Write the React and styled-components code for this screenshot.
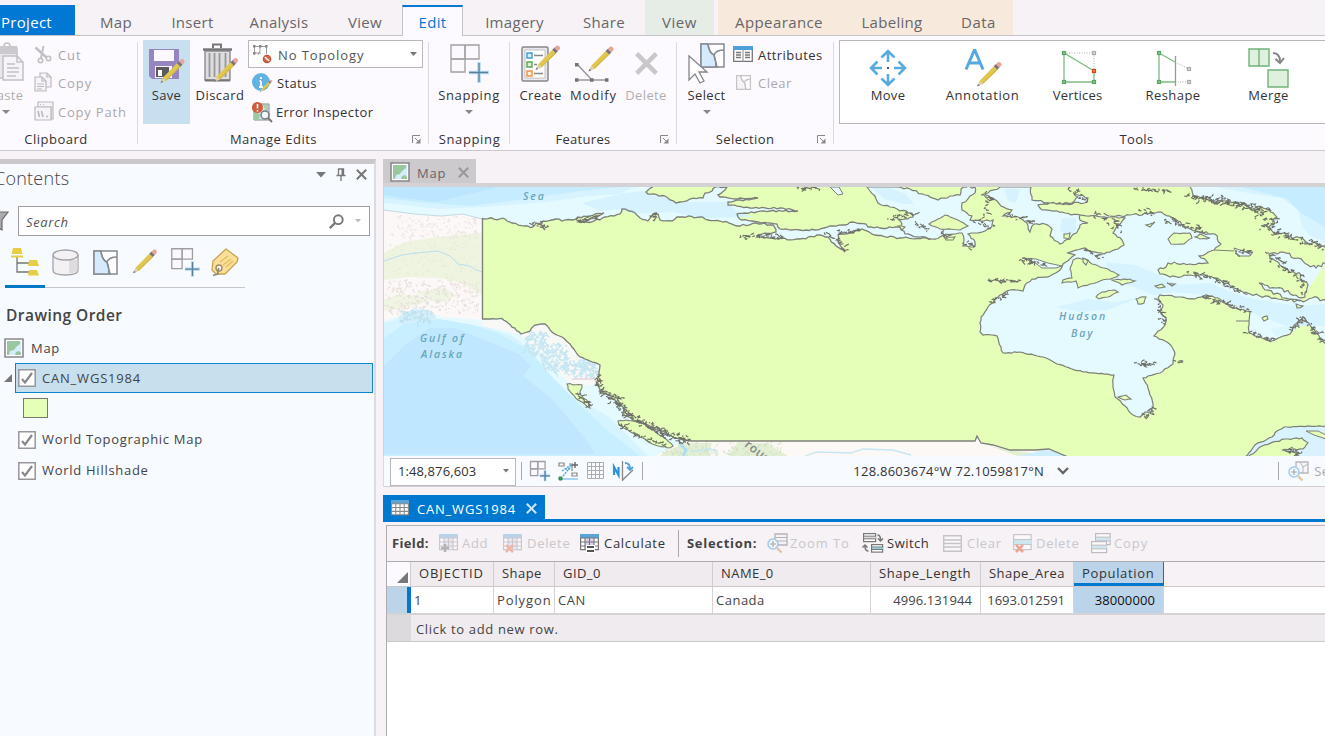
import React from 'react';
import styled, { createGlobalStyle, css } from 'styled-components';

const Global = createGlobalStyle`
  * { box-sizing: border-box; }
  html, body { margin: 0; height: 100%; overflow: hidden; }
  body { background: #f6f2f6; font-family: "Open Sans", "Noto Sans", sans-serif; font-size: 13px; letter-spacing: .35px; color: #333; }
  svg { display: block; flex: none; overflow: visible; }
`;

/* ---------- shell ---------- */
const Shell = styled.div`
  width: 1325px; height: 736px; overflow: hidden;
  display: flex; flex-direction: column; background: #f6f2f6;
`;
const Body = styled.div`display: flex; flex: 1; min-height: 0; padding-top: 8px;`;

/* ---------- ribbon tabs ---------- */
const TabBar = styled.div`
  display: flex; height: 36px; flex: none; border-bottom: 1px solid #c6c3c8;
`;
const TabSet = styled.div`
  display: flex; height: 35px; background: ${p => p.$bg}; margin-left: ${p => p.$gap || 0}px;
`;
const Tab = styled.div`
  width: ${p => p.$w}px; height: 30px; margin-top: 5px; padding-top: 4px;
  display: flex; align-items: center; justify-content: center;
  font-size: 15px; color: #68666a; white-space: nowrap; letter-spacing: ${p => p.$ls ?? 0.3}px;
  ${p => p.$project && css`background: #0078d4; color: #fff; justify-content: flex-start; padding-left: 1px;`}
  ${p => p.$active && css`
    height: 31px; margin-left: 2px; background: #fdfaff; color: #0078d4;
    border: 1px solid #c6c3c8; border-top: 2px solid #0078d4; border-bottom: 0; padding-top: 1px;
  `}
`;

/* ---------- ribbon ---------- */
const Ribbon = styled.div`
  display: flex; height: 115px; flex: none; background: #fdfaff; border-bottom: 1px solid #cbc8cc; overflow: hidden;
`;
const Group = styled.div`
  width: ${p => p.$w}px; flex: none; display: flex; flex-direction: column; position: relative;
  &::after { content: ""; width: 1px; height: 102px; background: #dcd9dd; position: absolute; right: 0; top: 6px; }
`;
const GroupBody = styled.div`display: flex; height: 92px; padding: 4px 0 0 ${p => p.$pl || 0}px;`;
const GroupName = styled.div`
  height: 22px; line-height: 22px; text-align: center; color: #333; padding-right: ${p => p.$pr || 0}px; letter-spacing: ${p => p.$ls ?? 0.35}px;
`;
const Launcher = styled.div`position: absolute; right: 8px; bottom: 6px;`;
const BigButton = styled.div`
  width: ${p => p.$w}px; height: 84px; margin-left: ${p => p.$ml || 0}px; flex: none;
  display: flex; flex-direction: column; align-items: center;
  color: ${p => (p.$off ? '#b0aeb2' : '#333')}; background: ${p => (p.$on ? '#c8dff0' : 'transparent')};
  white-space: nowrap; letter-spacing: ${p => p.$ls ?? 0.35}px;
`;
const BigIcon = styled.div`height: 46px; display: flex; align-items: center; justify-content: center;`;
const BigText = styled.div`line-height: 19px; height: 19px;`;
const Stack = styled.div`display: flex; flex-direction: column; margin-left: ${p => p.$ml || 0}px; width: ${p => p.$w}px;`;
const SmallButton = styled.div`
  height: ${p => p.$h || 28}px; display: flex; align-items: center; padding-left: ${p => p.$pl || 0}px; gap: ${p => p.$gap ?? 6}px;
  color: ${p => (p.$off ? '#aaa8ac' : '#333')}; white-space: nowrap; letter-spacing: ${p => p.$ls ?? 0.35}px;
  span { padding-top: ${p => p.$drop || 0}px; }
`;
const Combo = styled.div`
  width: 175px; height: 28px; margin-bottom: 1px; border: 1px solid #bbb8bd; background: #fff;
  display: flex; align-items: center; padding: 0 5px 0 3px; gap: 6px; color: #555; letter-spacing: .9px;
  span { padding-top: 2px; }
  svg:last-child { margin-left: auto; }
`;
const Gallery = styled.div`
  display: flex; width: 600px; height: 84px; background: #fff; border: 1px solid #bbb8bd;
`;
const GalleryItem = styled(BigButton)`
  height: 82px; margin-top: -1px;
  ${BigIcon} { padding-top: 9px; }
`;

/* ---------- contents pane ---------- */
const Contents = styled.div`
  width: 376px; flex: none; background: #f7faff; border-top: 5px solid #cbc8cc; border-right: 2px solid #dddbe0;
  display: flex; flex-direction: column;
`;
const PaneHead = styled.div`
  height: 27px; display: flex; align-items: center; padding-right: 7px;
  font-size: 18px; color: #757378; letter-spacing: .25px;
`;
const PaneTitle = styled.div`margin: 0 auto 0 -6px; font-weight: 300; color: #444;`;
const PaneTools = styled.div`display: flex; gap: 10px; align-items: center; margin-top: -6px;`;
const SearchRow = styled.div`display: flex; margin-top: 15px; align-items: center;`;
const FilterSlot = styled.div`width: 18px; flex: none; display: flex; svg { margin-left: -8px; }`;
const SearchBox = styled.div`
  width: 352px; height: 30px; border: 1px solid #a09ea2; background: #fff; display: flex; align-items: center;
  padding: 0 8px 0 7px; font-style: italic; color: #555; gap: 11px; letter-spacing: .6px;
  span { margin-right: auto; padding-top: 1px; }
`;
const ViewTabs = styled.div`
  width: 240px; height: 45px; margin: 7px 0 0 5px; display: flex; border-bottom: 1px solid #c8c6ca;
`;
const ViewTab = styled.div`
  width: 40px; height: 45px; display: flex; align-items: center; justify-content: center; padding-bottom: 7px;
  ${p => p.$on && css`border-bottom: 3px solid #0078c8; padding-bottom: 4px;`}
`;
const Heading = styled.div`font-weight: 600; font-size: 15.5px; color: #444; margin: 17px 0 0 6px; height: 22px; line-height: 20px; letter-spacing: .45px;`;
const TreeRow = styled.div`
  height: ${p => p.$h || 30}px; display: flex; align-items: center; padding: ${p => p.$pt || 0}px 0 0 ${p => p.$pl || 0}px; gap: ${p => p.$gap || 6}px;
  color: #444; letter-spacing: .72px;
  span { margin-top: ${p => p.$rise ?? -1}px; }
`;
const Selected = styled.div`
  width: 358px; height: 30px; background: #c8dfee; border: 1px solid #0a84d4; padding-left: 2px;
  display: flex; align-items: center; gap: 6px; letter-spacing: .8px; margin-left: -3px;
`;
const Swatch = styled.div`width: 25px; height: 20px; background: #e6ffb8; border: 1px solid #777; margin-left: 23px;`;
const SwatchRow = styled.div`height: 30px; display: flex; align-items: center;`;

/* ---------- map view ---------- */
const Work = styled.div`flex: 1; min-width: 0; margin-left: 7px; display: flex; flex-direction: column;`;
const MapTabs = styled.div`height: 28px; flex: none; border-bottom: 4px solid #d5d2d6; display: flex; align-items: flex-end;`;
const MapTab = styled.div`
  width: 93px; height: 24px; background: #cdcacd; display: flex; align-items: center; padding: 2px 7px 0 7px; gap: 7px;
  color: #66646a; letter-spacing: .8px;
  span { padding-top: 1px; }
  svg:last-child { margin-left: auto; }
`;
const MapFrame = styled.div`height: 269px; flex: none; border-left: 1px solid #d5d2d6; overflow: hidden;`;
const StatusBar = styled.div`
  height: 31px; flex: none; background: #f7faff; border-left: 1px solid #dddbe0; border-bottom: 1px solid #d0ced2;
  display: flex; align-items: center; padding: 0 0 0 6px; white-space: nowrap; color: #333; overflow: hidden;
  > * { flex: none; }
`;
const ScaleBox = styled.div`
  width: 126px; height: 28px; border: 1px solid #bbb8bd; background: #fff; display: flex; align-items: center;
  padding: 0 6px 1px 7px; justify-content: space-between; letter-spacing: .1px; margin-top: 1px;
`;
const VRule = styled.div`flex: none; width: 1px; height: ${p => p.$h}px; background: #aaa8ac; margin: 0 ${p => p.$mr || 0}px 0 ${p => p.$ml || 0}px;`;
const StatusIcons = styled.div`display: flex; gap: 8px; align-items: center;`;
const Coords = styled.div`width: 216px; display: flex; align-items: center; justify-content: space-between; letter-spacing: .25px; margin: 0 1px 0 210px;`;
const SelCount = styled.div`margin-left: 9px; display: flex; align-items: center; gap: 5px; color: #aaa8ac;`;

/* ---------- attribute table ---------- */
const TableTabs = styled.div`height: 27px; margin-top: 8px; flex: none; border-bottom: 3px solid #0078d0; display: flex;`;
const TableTab = styled.div`
  width: 162px; height: 25px; background: #0078d0; color: #fff; display: flex; align-items: center; padding: 2px 8px 0 8px;
  gap: 8px; letter-spacing: .8px;
  svg:last-child { margin-left: auto; }
`;
const TablePane = styled.div`
  flex: 1; margin: 3px 0 0 3px; border-left: 1px solid #aeabb0; border-top: 1px solid #b5b2b6; background: #fff; overflow: hidden;
`;
const Toolbar = styled.div`
  height: 35px; background: #f6f2f6; display: flex; align-items: center; padding: 0 0 1px 5px; white-space: nowrap; color: #333;
`;
const ToolLabel = styled.div`font-weight: 700; letter-spacing: ${p => p.$ls ?? 0}px; width: ${p => p.$w}px; color: #444; flex: none;`;
const Tool = styled.div`
  width: ${p => p.$w}px; display: flex; align-items: center; gap: ${p => p.$gap ?? 4}px; letter-spacing: ${p => p.$ls ?? 0.7}px;
  color: ${p => (p.$off ? '#c9c7cb' : '#333')};
`;
const columns = '24px 83px 61px 158px 158px 110px 93px 90px 1fr';
const HeadRow = styled.div`display: grid; grid-template: 100% / ${columns}; height: 26px; border-top: 1px solid #aeabb0; border-bottom: 1px solid #cbc8cc; background: #f6f2f6;`;
const DataRow = styled.div`display: grid; grid-template: 100% / ${columns}; height: 28px; border-bottom: 2px solid #d6d3d7; background: #fff;`;
const AddRow = styled.div`display: flex; height: 27px; background: #efebee; border-bottom: 1px solid #cbc8cc;`;
const AddStub = styled.div`width: 24px; background: #dcdadc;`;
const AddText = styled.div`line-height: 28px; padding-left: 5px; color: #444; letter-spacing: .65px;`;
const HeadCell = styled.div`
  background: ${p => (p.$on ? '#bcd4e9' : '#efebee')}; border-right: 1px solid #d0cdd1; line-height: 22px; padding: 0 9px 0 8px;
  text-align: ${p => p.$align || 'left'}; color: #333; letter-spacing: ${p => p.$ls ?? 0.45}px; white-space: nowrap;
  ${p => p.$on && css`border-right: 1px solid #0078d0; border-bottom: 3px solid #0078d0;`}
`;
const Corner = styled.div`background: #fdfaff; border-right: 1px solid #d0cdd1; display: flex; align-items: flex-end; justify-content: flex-end; padding: 0 2px 3px 0;`;
const RowMark = styled.div`background: #bcd4e9; border-right: 4px solid #0078d0;`;
const Cell = styled.div`
  border-right: 1px solid #d6d3d7; line-height: 27px; padding: 0 8px 0 3px; text-align: ${p => p.$align || 'left'};
  background: ${p => (p.$on ? '#bcd4e9' : '#fff')}; color: ${p => (p.$on ? '#111' : '#444')}; letter-spacing: ${p => p.$ls ?? 0.5}px; white-space: nowrap;
`;

/* ---------- icons ---------- */
const Arrow = ({ c = '#777', w = 7 }) => (
  <svg width={w} height={w / 2 + 0.5} viewBox="0 0 8 4.5"><path d="M0 0h8L4 4.5z" fill={c} /></svg>
);
const Close = ({ c = '#777', s = 11, w = 2 }) => (
  <svg width={s} height={s} viewBox="0 0 11 11"><path d="M.8.8l9.4 9.4M10.2.8L.8 10.2" stroke={c} strokeWidth={w} /></svg>
);
const LaunchIcon = () => (
  <svg width="9" height="9" viewBox="0 0 9 9" fill="none" stroke="#888"><path d="M.5 8V.5H8" /><path d="M3 3l4 4" /><path d="M8.5 3.5v5h-5z" fill="#888" stroke="none" /></svg>
);
/* Pencil pointing down-left, tip at (0,25), eraser at (25,0) */
const Pencil = ({ x = 0, y = 0, s = 1 }) => (
  <g transform={`translate(${x} ${y}) scale(${s})`}>
    <path d="M2.4 19.600L17 4.600l3.600 3.600L5.800 22.600z" fill="#e0c84f" /><path d="M5 21.900L19.800 7.400l.8.8L5.800 22.600z" fill="#d0b644" />
    <path d="M0 25l2.4-5.400 3.400 3z" fill="#e0cfae" /><path d="M0 25l1.100-2.600 1.600 1.500z" fill="#777" />
    <path d="M16.800 4.800L19 2.600l3.500 3.500-2.200 2.200z" fill="#76747a" />
    <path d="M18.800 2.800L21 .8q1.500-.9 2.800.4t.6 2.900L22.300 6.300z" fill="#e3a79c" />
  </g>
);
const PasteIcon = () => (
  <svg width="36" height="42" viewBox="0 0 36 42" fill="none" stroke="#c2c0c4" strokeWidth="1.5">
    <path d="M3 6h26v30H3z" fill="#e8e6ea" /><path d="M3 4h26v8H3z" fill="#cbc9cd" stroke="none" /><path d="M16 4q0-3 3-3t3 3" />
    <path d="M15 14h14l6 6v18H15z" fill="#f6f4f8" /><path d="M29 14v6h6M19 22h8M19 26h12M19 30h12M19 34h9" />
  </svg>
);
const CutIcon = () => (
  <svg width="18" height="19" viewBox="0 0 18 19" fill="none" stroke="#c2c0c4"><path d="M1.500 2.500l11 10" strokeWidth="2.600" /><path d="M9.500 1L7 13" strokeWidth="2" /><circle cx="6.500" cy="15.500" r="2.200" strokeWidth="1.600" /><circle cx="14.500" cy="13.500" r="2.200" strokeWidth="1.600" /></svg>
);
const CopyIcon = () => (
  <svg width="18" height="20" viewBox="0 0 18 20" fill="#f6f4f8" stroke="#bbb9bd" strokeWidth="1.2"><path d="M6 1h7l4 4v10H6z" /><path d="M1 5h7l4 4v10H1z" /><path d="M8 5v4h4M3 12h7M3 14.500h7M3 17h5M13 1v4h4" fill="none" /></svg>
);
const CopyPathIcon = () => (
  <svg width="20" height="20" viewBox="0 0 20 20" fill="#f6f4f8" stroke="#bbb9bd" strokeWidth="1.2"><path d="M4 1h15v17h-2V6H4z" /><path d="M6 3.500h1M9 3.500h1" /><path d="M1 6h16v13H1z" /><path d="M4 10l1.500 6M7.500 10L9 16M12 15.500h2" fill="none" strokeWidth="1.600" /></svg>
);
const SaveIcon = () => (
  <svg width="38" height="35" viewBox="0 0 38 35">
    <path d="M1 3h30v30H4l-3-3z" fill="#9685c0" /><path d="M6 4h20v11H6z" fill="#fbf8ff" /><path d="M7 20h17v12H7z" fill="#f5f2f8" /><path d="M8 21h13v10H8z" fill="#5b5a5e" /><path d="M10 24h4v6h-4z" fill="#fff" /><Pencil x="12.500" y="12.500" s=".98" />
  </svg>
);
const DiscardIcon = () => (
  <svg width="38" height="41" viewBox="0 0 38 41">
    <path d="M12 5V1.500h8V5" fill="none" stroke="#77767a" strokeWidth="2" /><path d="M4 8h25v29H4z" fill="#dddde0" stroke="#8a898c" strokeWidth="1.400" /><path d="M2 6.500h29" stroke="#737276" strokeWidth="2.400" />
    <path d="M8.500 10v24M13.500 10v24M18.500 10v24M24.500 10v24" stroke="#98979b" strokeWidth="1.800" /><path d="M4 37.500h25" stroke="#777" strokeWidth="2" /><Pencil x="13" y="14.500" s=".98" />
  </svg>
);
const TopologyIcon = () => (
  <svg width="20" height="20" viewBox="0 0 20 20" fill="none" stroke="#999"><path d="M1 2.500h14M1 9h8M2.500 1v10M8 1q1 7-2 10M14.500 2v8" /><path d="M1 1h2.500v2.500H1zM7 1h2.500v2.500H7zM13 1h2.500v2.500H13zM1 8h2.500v2.500H1z" fill="#888" stroke="none" /><circle cx="15" cy="15" r="3.600" fill="#d4694c" stroke="#cc4d2d" strokeWidth="1.400" /><path d="M12.800 13.100l4.500 4" stroke="#fff" strokeWidth="1.400" /></svg>
);
const StatusIcon = () => (
  <svg width="21" height="20" viewBox="0 0 21 20"><circle cx="9" cy="9" r="9" fill="#62b2e4" /><path d="M9 4v2M9 8v6M7 14h4M7.500 8H9" stroke="#fff" strokeWidth="1.800" /><Pencil x="8" y="6.500" s=".5" /></svg>
);
const ErrorIcon = () => (
  <svg width="21" height="20" viewBox="0 0 21 20"><path d="M2 2h15v16H2z" fill="#d3eaf8" stroke="#888" /><path d="M2 10l6 2-1 6H2z" fill="#9cc8a4" /><path d="M11 3h5v6l-3-1z" fill="#a9d0a8" /><circle cx="5.500" cy="5.500" r="5.500" fill="#cf5b3c" /><path d="M5.500 2v4.500M5.500 8v1.500" stroke="#fff" strokeWidth="1.600" /><circle cx="13" cy="13" r="4" fill="#eef6fb" stroke="#777" strokeWidth="1.500" /><path d="M16 16l4 4" stroke="#777" strokeWidth="2" /></svg>
);
const SnapIcon = ({ s = 1 }) => (
  <svg width={39 * s} height={39 * s} viewBox="0 0 39 39" fill="none">
    <path d="M1 1h28v14H1zM1 1h14v27H1z" stroke="#a09ea3" strokeWidth={1.300 / s} fill="#fbf9fe" /><path d="M15 1v14M1 15h14" stroke="#a09ea3" strokeWidth={1.200 / s} />
    <path d="M29 18v21M19 28.500h20" stroke="#b5dcf8" strokeWidth={3.600 / Math.sqrt(s)} /><path d="M29 19v19M19 28.500h19" stroke="#5c7f98" strokeWidth={1.300 / s} />
  </svg>
);
const CreateIcon = () => (
  <svg width="40" height="38" viewBox="0 0 40 38">
    <rect x="1" y="3" width="26" height="34" rx="1.500" fill="#e9e8eb" stroke="#88878b" strokeWidth="1.500" /><path d="M4 6h20v28H4z" fill="#fff" stroke="#b5b4b8" strokeWidth=".8" />
    <path d="M6 9h5v5H6z" fill="#d8efff" stroke="#3f9bd8" strokeWidth="1.400" /><path d="M6 18h5v5H6z" fill="#dff1db" stroke="#55a555" strokeWidth="1.400" /><path d="M6 27h5v5H6z" fill="#fff0dc" stroke="#f09038" strokeWidth="1.400" />
    <path d="M13 11.500h9M13 20.500h3M13 29.500h9" stroke="#888" strokeWidth="1.400" /><Pencil x="14.500" y="1" />
  </svg>
);
const ModifyIcon = () => (
  <svg width="38" height="37" viewBox="1 0 38 37"><path d="M3 19l14 15M2 35h32" stroke="#999" strokeWidth="1.500" /><path d="M1 18h3.500v3.500H1zM1 33.200h3.500v3.500H1zM16 33.200h3.500v3.500H16zM31 33.200h3.500v3.500H31z" fill="#737276" /><Pencil x="14.500" y="1" s="1.020" /></svg>
);
const PolySelect = ({ s = 25, off }) => (
  <svg width={s} height={s} viewBox="0 0 25 25" fill="none" stroke={off ? '#c6c4c8' : '#858b91'} strokeWidth={off ? 2 : 1.500}>
    <path d="M1 1h23v23H1z" fill="#fffdfd" /><path d="M1 1h7q1 9 6 11l3 12H1z" fill={off ? '#f6f4f8' : '#d5eafc'} /><path d="M8 1q1 9 6 11M24 7q-8 0-10 5 2 5 2 12" />
  </svg>
);
const SelectIcon = () => (
  <svg width="38" height="40" viewBox="0 0 38 40"><g transform="translate(12 0)"><PolySelect /></g><path d="M1 13v24l6-6 5 9 4-2-5-9h8z" fill="#fff" stroke="#85848a" strokeWidth="1.300" /></svg>
);
const AttributesIcon = () => (
  <svg width="20" height="16" viewBox="0 0 20 16"><path d="M.7.7h18.600v14.600H.7z" fill="#fff" stroke="#77767a" strokeWidth="1.300" /><path d="M0 0h20v4H0z" fill="#4f9fd8" /><path d="M10 4v12" stroke="#888" /><path d="M3 6.500h5M3 9h5M3 11.500h5M12 6.500h5M12 9h5M12 11.500h5" stroke="#777" strokeWidth="1.300" /></svg>
);
const MoveIcon = () => (
  <svg width="38" height="38" viewBox="0 0 38 38" fill="none" stroke="#5aabe2" strokeWidth="2.600"><path d="M19 13V2M12.500 8.500L19 2l6.500 6.500M19 25v11M12.500 29.500L19 36l6.500-6.500M13 19H2M8.500 12.500L2 19l6.500 6.500M25 19h11M29.500 12.500L36 19l-6.500 6.500" /><path d="M18 18h2v2h-2z" fill="#555" stroke="none" /></svg>
);
const AnnotationIcon = () => (
  <svg width="38" height="38" viewBox="0 0 38 38"><path d="M2 20.500L10.200 1.500h.8L19 20.500M5 14h11" fill="none" stroke="#55a8e0" strokeWidth="3" /><Pencil x="13" y="12.500" /></svg>
);
const Node = ({ x, y, c = '#5aa463', f = '#8cc48f' }) => <rect x={x - 1.500} y={y - 1.500} width="3" height="3" fill={f} stroke={c} strokeWidth="1.200" />;
const VerticesIcon = () => (
  <svg width="34" height="33" viewBox="-1 0 34 33"><path d="M32 20L2 2v29h30V20" fill="none" stroke="#7cbc80" strokeWidth="1.300" /><path d="M2 2h30v17" fill="none" stroke="#aaa" strokeDasharray="1 1.500" /><Node x={2} y={2} /><Node x={2} y={31} /><Node x={32} y={31} /><Node x={32} y={2} c="#aaa" f="#ddd" /><Node x={32} y={20} c="#d84315" f="#ff8a50" /></svg>
);
const ReshapeIcon = () => (
  <svg width="34" height="33" viewBox="-1 0 34 33"><path d="M18 11L2 2v29h16" fill="none" stroke="#7cbc80" strokeWidth="1.300" /><path d="M18 11l14 7M18 31h14" fill="none" stroke="#aaa" strokeDasharray="1 1.500" /><path d="M18.500 5v30" stroke="#999" strokeWidth="1.300" /><Node x={2} y={2} /><Node x={2} y={31} /><Node x={32} y={18} c="#aaa" f="#ddd" /><Node x={32} y={31} c="#aaa" f="#ddd" /></svg>
);
const MergeIcon = () => (
  <svg width="40" height="40" viewBox="1 0 40 40"><path d="M1 1h20v17H1zM11 1v17M20 22h20v17H20z" fill="#e0f0de" stroke="#72b178" strokeWidth="1.400" /><path d="M25 5q7 0 7 9M27.500 11l4.500 4 4-5" fill="none" stroke="#85848a" strokeWidth="2" /></svg>
);
const MapIcon = () => (
  <svg width="20" height="20" viewBox="0 0 20 20"><path d="M1 1h18v18H1z" fill="#fff" stroke="#8a888c" strokeWidth="1.600" /><path d="M3 3h14v14H3z" fill="#d5ecfb" /><path d="M3 3h13v3l-4 3-2 3-4 1-1 4H3zM11 17l1-3 3-1 2 2v2z" fill="#9ac7a0" /></svg>
);
const PinIcon = () => (
  <svg width="10" height="13" viewBox="0 0 10 13" fill="none" stroke="#777" strokeWidth="1.300"><path d="M2.500 1h5v6.500h-5zM.5 7.500h9M5 8v5" /><path d="M6.500 1v6" strokeWidth="2" /></svg>
);
const FilterIcon = () => (
  <svg width="16" height="20" viewBox="0 0 16 20"><path d="M1 1h15l-6 8v10l-3-2V9z" fill="#ababaf" stroke="#6d6b70" strokeWidth="1.200" /></svg>
);
const SearchIcon = () => (
  <svg width="15" height="15" viewBox="0 0 15 15" fill="none" stroke="#777"><circle cx="9.300" cy="5.700" r="4.400" strokeWidth="1.900" /><path d="M6 9L.8 14.200" strokeWidth="2.400" /></svg>
);
const TreeIcon = () => (
  <svg width="28" height="28" viewBox="0 0 28 28"><path d="M6 9v15h12M6 15h12" fill="none" stroke="#777" strokeWidth="1.300" /><path d="M2 0h8l1.500 6H.5zM0 7.500h12v2H0zM18 12h8l2 6H17zM18 22h8l2 5.500H17z" fill="#e6cf46" /></svg>
);
const CylinderIcon = () => (
  <svg width="27" height="27" viewBox="0 0 27 27" fill="#f3f1f4" stroke="#a5a3a7" strokeWidth="1.300"><path d="M1 6v15q0 5 12.500 5T26 21V6" /><path d="M17 11h8.500v11q-4 2-8.500 2.500z" fill="#dedce0" stroke="none" /><ellipse cx="13.500" cy="6" rx="12.500" ry="5" /></svg>
);
const PencilIcon = () => (<svg width="26" height="26" viewBox="0 0 26 26"><g transform="translate(1 0)"><Pencil s=".97" /></g></svg>);
const TagIcon = () => (
  <svg width="28" height="28" viewBox="0 0 28 28"><path d="M15 1l12 9-1 4-12 12H5l-4-4 1-9z" fill="#fbe09a" stroke="#c9a44c" strokeWidth="1.300" strokeLinejoin="round" /><path d="M9 14l8-6M12 17l8-6M15 19l7-6" stroke="#e0bb60" strokeWidth="1.300" /><circle cx="8" cy="20" r="3" fill="#f8faff" stroke="#a58a58" strokeWidth="1.400" /><path d="M8 20q-2 3-1 6l-5 1.500" fill="none" stroke="#888" strokeWidth="1.600" /></svg>
);
const Check = () => (
  <svg width="18" height="18" viewBox="0 0 18 18"><path d="M.8.8h16.400v16.400H.8z" fill="#fff" stroke="#98969a" strokeWidth="1.500" /><path d="M4 10l3 3.500L14 4" fill="none" stroke="#88868a" strokeWidth="2.200" /></svg>
);
const Expander = ({ s = 8 }) => (<svg width={s} height={s} viewBox="0 0 8 8"><path d="M8 0v8H0z" fill="#777" /></svg>);
const TableIcon = ({ mark, c = '#888', head = '#5aa5d8', o = 1, s = 19 }) => (
  <svg width={s} height={s * 0.95} viewBox="0 0 19 18" opacity={o}>
    <path d="M.6.600h17.800v15H.6z" fill="#fff" stroke={c} strokeWidth="1.200" />{mark && <path d="M5 4.500h9v11H5z" fill="#dcd2ee" />}<path d="M0 0h19v4H0z" fill={head} /><path d="M0 4h19M0 8h19M0 12h19M5 4v12M9.500 4v12M14 4v12" stroke={c} fill="none" strokeWidth="1.100" />
    {mark === '+' && <path d="M6 10v8M2 14h8" stroke="#555" strokeWidth="2.500" />}
    {mark === 'x' && <path d="M3 11l7 7M10 11l-7 7" stroke="#e85c30" strokeWidth="2.500" />}
    {mark === '=' && <g><path d="M6 11h9v8H6z" fill="#fff" /><path d="M7 13h7M7 17h7" stroke="#555" strokeWidth="1.800" /></g>}
  </svg>
);
const CorrectIcon = () => (
  <svg width="21" height="20" viewBox="0 0 21 20" fill="none"><path d="M4 18h16" stroke="#a8d5f5" strokeWidth="2" /><path d="M1 2h5v3H1zM14 12h5v3h-5zM11 3h4M14 3v7" stroke="#888" strokeWidth="1.200" /><path d="M5 15L14 4M4 10l9-6M7 8h6" stroke="#5aa9dd" strokeWidth="1.500" strokeDasharray="2 1" /><path d="M17 1v6M14 4h6" stroke="#666" strokeWidth="1.400" /><path d="M1 16h3v3H1z" fill="#48a060" stroke="#328048" /></svg>
);
const GridIcon = () => (
  <svg width="17" height="17" viewBox="0 0 17 17" fill="none" stroke="#aeacb0"><path d="M.5.500h16v16H.5zM.5 4.500h16M.5 8.500h16M.5 12.500h16M4.500.500v16M8.500.500v16M12.500.500v16" /></svg>
);
const NorthIcon = () => (
  <svg width="22" height="20" viewBox="0 0 22 20" fill="none"><path d="M2 14V6l4.500 8V6" stroke="#2e93d6" strokeWidth="2.200" /><path d="M10.500 0v20M10.500 19L21 9" stroke="#888" strokeWidth="1.300" /><path d="M13 2q5 0 5 6M15 6l3 3 3-3" stroke="#4ba3dd" strokeWidth="1.800" /></svg>
);
const ZoomSel = ({ off, rows }) => (
  <svg width="21" height="20" viewBox="0 0 21 20" fill="none" opacity={off ? 0.6 : 1}><path d="M8 1h12v11H8z" fill="#f6f4f8" stroke="#8c8a8e" strokeWidth="1.300" />{rows ? <path d="M8 4.500h12M8 8h12" stroke="#8c8a8e" /> : <path d="M12 1l3 5v6M20 3l-5 3" stroke="#8c8a8e" />}<circle cx="6" cy="11" r="5" fill="#eef7fe" stroke="#6ab0e4" strokeWidth="1.600" /><path d="M6 8v6M3 11h6" stroke="#777" strokeWidth="1.200" /><path d="M10 15l4.500 4.500" stroke="#d8a860" strokeWidth="2.400" /></svg>
);
const Rows = ({ x = 0, y = 0, w = 12, h = 9, f = '#8ed3e8', c = '#777' }) => (
  <g transform={`translate(${x} ${y})`}><rect x=".6" y=".6" width={w} height={h} fill="#fff" stroke={c} strokeWidth="1.200" /><path d={`M1 ${h / 2 + 0.600}h${w}`} stroke={f} strokeWidth={h / 3.500} /><path d={`M0 ${h / 3 + 0.500}h${w + 1}M0 ${h * 2 / 3 + 0.500}h${w + 1}`} stroke={c} /></g>
);
const SwitchIcon = () => (
  <svg width="20" height="20" viewBox="0 0 20 20"><Rows f="#ddd" h={8} /><Rows x={8} y={11} h={7.500} w={11} /><path d="M14.500 2q3 0 3 5M15 5.500L17.500 8 20 5.500M5.500 18Q2 18 2 13M-.5 14.500L2 12l2.500 2.500" fill="none" stroke="#777" strokeWidth="1.500" /></svg>
);
const ClearIcon = () => (<svg width="19" height="17" viewBox="0 0 19 17" fill="#f9f7fa" stroke="#c6c4c8" strokeWidth="1.400"><path d="M.7.700h17.600v15.600H.7zM.7 5h17.600M.7 8.500h17.600M.7 12h17.600" /></svg>);
const DelRowIcon = () => (<svg width="19" height="18" viewBox="0 0 19 18" opacity=".5"><Rows w={17.500} h={15} f="#a8dcec" c="#999" /><path d="M3 11l7 7M10 11l-7 7" stroke="#e85c30" strokeWidth="2.500" /></svg>);
const CopyRowIcon = () => (<svg width="20" height="20" viewBox="0 0 20 20" opacity=".5"><Rows x={4} w={14.500} h={11} f="#a8dcec" c="#888" /><Rows y={8} w={15} h={11} f="#a8dcec" c="#888" /></svg>);

/* ---------- map drawing ---------- */
const makeRandom = start => {
  let seed = (start * 7919 + 104729) % 2147483647;
  const next = () => {
    seed = (seed * 16807) % 2147483647;
    return seed / 2147483647;
  };
  next();
  next();
  return next;
};
const parse = s => s.trim().split(/\s+/).map(p => p.split(',').map(Number));
/* Subdivides a polyline and pushes each new point sideways to give a rugged coast */
const rough = (s, amp = 1.5, seed = 7, close = false) => {
  const rnd = makeRandom(seed);
  const pts = parse(s);
  if (close) pts.push(pts[0]);
  const out = [pts[0]];
  for (let i = 1; i < pts.length; i++) {
    const [ax, ay] = pts[i - 1];
    const [bx, by] = pts[i];
    const d = Math.hypot(bx - ax, by - ay);
    const n = Math.max(1, Math.round(d / 3));
    for (let k = 1; k < n; k++) {
      const t = k / n;
      const o = (rnd() - 0.5) * 2 * amp;
      out.push([ax + (bx - ax) * t - ((by - ay) / d) * o, ay + (by - ay) * t + ((bx - ax) / d) * o]);
    }
    out.push([bx, by]);
  }
  return 'M' + out.map(p => p[0].toFixed(1) + ' ' + p[1].toFixed(1)).join('L') + (close ? 'Z' : '');
};
/* A tangle of short strokes along a line: inlets and skerries */
const fjords = (s, spread = 4, step = 2, seed = 3) => {
  const rnd = makeRandom(seed);
  const pts = parse(s);
  let d = '';
  for (let i = 1; i < pts.length; i++) {
    const [ax, ay] = pts[i - 1];
    const [bx, by] = pts[i];
    const n = Math.round(Math.hypot(bx - ax, by - ay) / step);
    for (let k = 0; k < n; k++) {
      const x = ax + ((bx - ax) * k) / n + (rnd() - 0.5) * spread;
      const y = ay + ((by - ay) * k) / n + (rnd() - 0.5) * spread;
      d += `M${x.toFixed(1)} ${y.toFixed(1)}l${((rnd() - 0.4) * 7).toFixed(1)} ${((rnd() - 0.4) * 4).toFixed(1)}l${((rnd() - 0.5) * 5).toFixed(1)} ${((rnd() - 0.5) * 3).toFixed(1)}`;
    }
  }
  return d;
};
const speckle = (x, y, w, h, n, len, seed) => {
  const rnd = makeRandom(seed);
  let d = '';
  for (let i = 0; i < n; i++) d += `M${(x + rnd() * w).toFixed(1)} ${(y + rnd() * h).toFixed(1)}l${((rnd() - 0.4) * len).toFixed(1)} ${((rnd() - 0.4) * len).toFixed(1)}l${((rnd() - 0.5) * len).toFixed(1)} ${((rnd() - 0.5) * len).toFixed(1)}`;
  return d;
};

const NORTH = '482,218.500 500,219 505,219 512,223 525,226 533,227 536,223 541,224 545,230 541,225 543,221 552,220 556,219 562,221 572,220 578,217 590,216 604,213 595,218 578,222 592,222 605,217 614,216 620,214 622,209 629,211 635,213 640,218 648,221 653,214 658,214 660,220 672,221 677,217 700,217 705,219 720,221 740,226 756,223 773,225 776,232 762,234 757,237 775,239 800,239 820,235 828,237 836,246 845,252 839,243 838,235 850,233 862,229 875,235 900,238 935,239 941,236';
const VICTORIA = '941,234 930,230 905,227 880,228 868,227 866,224 852,222 845,225 830,226 815,230 800,230 780,229 777,224 758,222 742,220 738,217 737,214 745,213 770,211 798,211 780,208 750,208 728,205 728,202 758,198 735,199 720,197 718,195 725,190 727,187 715,187 712,191 705,193 703,198 690,199 680,202 676,203 670,200 665,196 648,194 646,192 653,187';
const QUEEN = '867,187 870,191 876,199 878,203 890,207 897,209 912,213 913,217 905,219 898,219 902,224 900,227 905,234 935,239 946,234 962,233 964,240 963,246 974,247 975,242 968,234 975,233 985,231 992,226 993,220 984,221 970,220 972,216 962,210 962,203 968,199 975,193 975,187 963,187 960,195 950,196 938,200 925,195 910,189 898,187';
const BOOTHIA = '1000,187 988,193 981,195 994,199 1001,206 1012,210 1003,216 1018,217 1027,223 1030,232 1034,224 1045,224 1052,229 1050,236 1060,244 1070,239 1078,230 1080,225 1088,223 1080,220 1080,215 1065,213 1042,210 1038,205 1050,203 1066,204 1087,202 1088,198 1074,193 1078,197 1072,203 1050,203 1032,200 1031,187';
const HUDSON = '1080,215 1110,217 1125,218 1121,223 1118,226 1113,233 1122,240 1124,245 1118,249 1104,254 1088,250 1085,248 1067,253 1075,255 1063,264 1060,270 1050,276 1032,279 1025,285 1023,291 1010,290 1000,295 988,307 981,317 980,332 983,335 997,336 1001,347 1003,353 1020,352 1043,357 1057,364 1083,372 1114,375 1113,384 1115,397 1125,406 1133,415 1140,417 1145,412 1152,412 1153,404 1150,395 1148,388 1143,378 1160,373 1173,364 1175,354 1172,347 1165,341 1154,336 1165,325 1166,318 1160,312 1163,305 1158,298 1160,295 1178,297 1195,299 1206,295 1218,298 1230,307 1250,312 1249,322 1249,333 1258,337 1272,341 1290,334 1293,327 1303,317 1312,328 1326,344';
const BAFFIN = '1326,300 1312,298 1294,302 1265,290 1259,283 1276,288 1296,295 1305,297 1308,285 1300,279 1304,275 1288,270 1276,261 1269,254 1280,252 1298,258 1308,265 1316,268 1326,263';
const FOXE = '1300,301 1278,299 1250,294 1240,291 1220,280 1208,276 1190,275 1170,277 1160,274 1158,270 1166,267 1168,263 1190,264 1208,263 1199,256 1214,250 1221,244 1215,234 1200,232 1190,229 1172,218 1158,212 1148,214 1130,215 1110,216';
const ATLANTIC = '1190,187 1193,195 1210,199 1216,204 1225,201 1238,204 1255,208 1266,209 1277,217 1271,225 1262,226 1272,231 1290,236 1305,241 1326,248';
const WEST = '482,319 502,318.500 508,323 521,334 530,331 535,325 545,324 552,332 562,337 570,344 580,357 590,361 600,365 599,375 597,384 602,392 611,396 616,402 624,408 624,415 636,421 648,426 662,431 675,438 692,441';
const SOUTH = 'L975 441L977 436L981 443L993 445L1010 450L1035 450L1049 449L1068 457';
const closeOn = (d, tail) => d + tail + 'Z';
const join = (d1, d2) => d1 + 'L' + d2.slice(1);

const ISLANDS = [
  '1078,258 1088,260 1092,264 1108,269 1119,275 1113,278 1100,281 1090,284 1078,288 1076,281 1062,283 1063,280 1072,278 1070,269 1073,260',
  '1112,280 1130,279 1135,281 1122,285', '1096,297 1102,292 1115,290 1118,292 1108,297 1099,299', '1136,299 1141,297 1146,297 1144,303 1138,304',
  '1168,239 1174,233 1190,233 1192,238 1184,244 1171,244', '1195,237 1200,234 1210,238 1200,239', '1155,286 1162,284 1165,287 1158,288',
  '929,224 938,219 945,215 958,220 968,226 960,230 940,229', '1064,234 1070,233 1069,239 1064,238', '1118,397 1126,395 1131,399 1125,400',
  '1262,318 1267,316 1268,319 1264,321', '1167,283 1175,284 1172,286', '944,237 955,237 953,240 946,240', '898,226 905,227 902,230', '1146,225 1155,222 1150,227',
  '618,421 626,420 637,422 650,426 658,434 667,440 673,446 668,448 655,445 640,437 628,430 619,425', '567,384 582,385 580,394 588,402 590,408 578,400 568,389', '1296,304 1303,306 1297,308', '1083,258 1088,261 1086,265 1083,262',
];
const SPOTS = [
  ['534,226 540,223 546,229', 5], ['575,221 600,216', 3], ['740,236 785,236', 3], ['826,234 838,240 844,250', 6], ['838,233 860,230', 3], ['650,216 660,216', 5],
  ['890,219 915,214', 6], ['940,233 950,238', 5], ['963,243 974,247', 5], ['978,222 992,228', 6], ['915,222 930,230', 3], ['988,191 985,216', 5], ['797,188 818,187', 2],
  ['1008,216 1035,222', 4], ['1070,188 1088,200', 6], ['1095,213 1122,228', 7], ['1135,188 1170,191', 5], ['1142,209 1155,214', 5], ['1165,218 1205,232', 6],
  ['1190,196 1220,200 1260,208', 6], ['1190,197 1225,202 1268,212', 5], ['1255,214 1275,222 1262,228', 7], ['1272,231 1300,240 1325,247', 6], ['1235,252 1250,250', 5], ['1268,254 1300,280 1305,295', 6],
  ['1190,272 1225,283 1243,292', 4], ['1085,250 1102,260', 5], ['992,302 1008,292', 3], ['1139,363 1153,362', 6], ['1139,364 1150,364', 3], ['1176,361 1181,363', 2], ['1249,333 1275,341', 3], ['1292,330 1303,318 1325,342', 4],
  ['1159,300 1163,325', 2], ['1150,406 1152,414 1143,415', 3], ['1202,296 1250,311', 3], ['1286,449 1303,453', 4], ['1020,259 1045,265', 2], ['988,279 1020,282', 2],
];
const MapDrawing = () => {
  const north = rough(NORTH, 1, 11);
  const vic = rough(VICTORIA, 0.8, 5);
  const queen = rough(QUEEN, 1.1, 9);
  const booth = rough(BOOTHIA, 1.1, 13);
  const bay = rough(HUDSON, 0.7, 17);
  const foxe = rough(FOXE, 1.2, 19);
  const baffin = rough(BAFFIN, 2, 23);
  const atl = rough(ATLANTIC, 2.2, 29);
  const west = rough(WEST, 0.6, 31);
  const green = '#e6ffb8';
  const line = '#7d8078';
  const shallow = '#e5faff';
  return (
    <svg width="941" height="269" viewBox="384 187 941 269">
      <clipPath id="view"><path d="M384 187h941v269H384z" /></clipPath>
      <g clipPath="url(#view)">
        <rect x="384" y="187" width="941" height="269" fill={shallow} />
        <path d="M384 210l30 4 27 2 22-2 19 5v101l-40-3-25-10-18 9-15 5z" fill="#fcf8f7" />
        <path d="M384 253l20-11 32-5 46-4v62l-25-14-20-3-28-1-25 3z" fill="#eef4e0" />
        <path d="M384 300l14-6 20 2 12 5-24 6-22 4zM415 292l30-4 12 8-20 8z" fill="#eff4e3" />
        <path d={speckle(386, 216, 92, 22, 110, 4, 41)} stroke="#ece4e2" fill="none" /><path d={speckle(386, 281, 92, 32, 240, 4, 43)} stroke="#e7dedb" fill="none" />
        <path d={speckle(386, 242, 92, 40, 90, 4, 47)} stroke="#e4ecd6" fill="none" />
        <path d="M384 261l18-6 14-2 22-2 12 5 8 8 12 2 6 4 7 2" stroke="#b6e0ee" fill="none" /><path d="M384 210l30 4 27 2 22-2 19 5" stroke="#c2dbe2" fill="none" />
        <path d="M384 323l20-6 24 0 24 5 38 6 22 8 16 12 20 24 20 22 40 22 40 40H384z" fill="#d6f4ff" />
        <path d="M384 338l20-14 35-5 35 6 25 9 30 16 20 24 30 30 30 28 31 24H384z" fill="#c8efff" />
        <path d="M384 366l22-22 24-16 25 0 30 12 34 14 12 12-8 10 28 22 34 40 10 16H384z" fill="#bfe7ff" />
        <path d="M398 318l6-6 20-3 10 5 2 5-20 2-14 3z" fill="#d3eef8" /><path d={speckle(400, 310, 32, 12, 50, 5, 53)} stroke="#b9e0ee" fill="none" />
        <path d="M482 320l22 0 16 14 15-10 15 2 22 20 10 15 18 6v16l-20 4-12-5-20-20-28-28-38-8z" fill="#f8f8f7" />
        <path d={speckle(525, 332, 22, 22, 80, 6, 59) + speckle(543, 345, 24, 26, 100, 6, 61) + speckle(564, 360, 32, 16, 100, 6, 67)} stroke="#c6e6f1" strokeWidth="1.300" fill="none" />
        <path d="M572 379l20 0 6-2" stroke="#e2c3cf" fill="none" />
        <path d="M655 456l20-10 12-6 290 0 92 16z" fill="#fcf8f5" />
        <path d="M660 456l14-8 12-5 26 0-4 13zM728 456l10-14 30 2 20 12zM990 446l22 4 25 4-20 2z" fill="#e2efd2" />
        <path d={speckle(662, 443, 120, 13, 120, 4, 71)} stroke="#d3e2c9" fill="none" /><path d="M690 452l20-3 8 2M805 456l12-4 34 1 12-4 30 1 18 5" stroke="#c5e6f3" fill="none" strokeWidth="1.300" />
        <path d="M1018 456l22-5 20-1 8 6z" fill="#cdeefa" /><path d="M680 444l6 6-3 6" stroke="#b0dcf0" strokeWidth="3" fill="none" />
        <path d={closeOn(west, SOUTH + 'L1326 457L1326 187L653 187L482 218')} fill={green} />
        <path d={west + SOUTH} fill="none" stroke={line} strokeWidth="1.300" />

        <path d={closeOn(join(north, vic), 'L482 187L482 218')} fill={shallow} />
        <path d="M384 187h250l-14 7-30 2-45 6-60 5-45 2-56-6z" fill="#d7f3ff" />
        <path d="M384 187h236l-40 4-70 10-40 5-40-3-46-5z" fill="#c6ecff" /><path d="M384 187h116l-35 8-30 7-51-7z" fill="#bce6ff" />
        <path d="M625 193l20-2 4 4 16 2 11 6 12-1 12 0 28 0 4 5 8 6 14 4-54 1-28-6-38 2-14-5-20 2-18-8z" fill="#d6f2ff" />
        <path d="M646 192l7-5h62l-3 4-8 2-1 5-13 1-10 3-4 1-6-3-5-4-17-2z" fill={green} />
        <path d={north} fill="none" stroke={line} strokeWidth="1.300" /><path d={vic} fill="none" stroke={line} strokeWidth="1.300" />
        <path d="M482.500 218v101" stroke={line} strokeWidth="1.400" />
        <path d={queen + 'Z'} fill={shallow} stroke={line} strokeWidth="1.200" /><path d={booth + 'Z'} fill={shallow} stroke={line} strokeWidth="1.200" />
        <path d="M872 188h18l16 6 8 10-10 0-20-5z" fill="#d6f2ff" /><path d="M1062 218l14 0 0 12-8 8-8-8z" fill="#d6f2ff" /><path d="M1004 189h16l-4 14-8-2z" fill="#d6f2ff" />
        <path d={closeOn(join(join(bay, baffin), foxe), '')} fill={shallow} />
        <path d="M1105 262l30 3 24 10 20 10 30-2 30 12 20 5 40 6 27-2v22l-40 0-36-14-36-16-40-4-20 3-36-14z" fill="#d6f3ff" />
        <path d="M1056 307l32-8 25 3 25-4-30 12-30 2z" fill="#d6f3ff" />
        <path d="M1270 328q20 0 32-10l-6 12-20 6z" fill="#d6f3ff" opacity=".7" />
        {[bay, foxe, baffin].map(d => <path key={d.length} d={d} fill="none" stroke={line} strokeWidth="1.200" />)}
        <path d={closeOn(atl, 'L1326 187')} fill={shallow} /><path d="M1215 187h110v55l-15-6-8-10-4-16-16-12-34-5z" fill="#d6f3ff" /><path d="M1240 187h85v40l-24-14-14-14-30-8z" fill="#c6edff" />
        <path d={atl} fill="none" stroke={line} strokeWidth="1.200" />
        <path d="M830 187l8 8 5-1-4-7z" fill={shallow} stroke={line} />
        <path d={rough('1245,457 1255,445 1272,437 1277,431 1284,427 1326,426 1326,457', 0.6, 77)} fill="#d8f3ff" stroke={line} strokeWidth="1.200" />
        <path d={rough('1248,457 1262,446 1285,439 1302,438 1308,443 1303,449 1282,450 1296,453 1300,457', 0.7, 79)} fill={green} stroke={line} strokeWidth="1.200" />
        <path d="M1306 431l12 0 8 4v4l-12-4z" fill={green} stroke={line} />
        <path d="M1022 258l14 1 12 4 14 3-6 2-14 0-8-6zM1214 250l20 1 M1234 248l12 4 7 0-3 4-12 0zM1236 321h13" fill={shallow} stroke={line} />
        {ISLANDS.map((s, i) => <path key={s} d={rough(s, 0.6, 83 + i, true)} fill={green} stroke={line} strokeWidth="1.100" />)}
        <g fill="none" stroke="#6c6f67" strokeWidth="1.100">
          {SPOTS.map(([s, w], i) => <path key={s} d={fjords(s, w, 1.500, 101 + i)} />)}
          <path d={fjords('597,376 600,388 616,400 624,412 640,421 660,430 675,438 690,440', 7, 0.750, 211) + fjords('612,398 622,404', 9, 0.700, 223) + fjords('578,394 590,406', 2, 1, 213) + fjords('619,423 640,436 665,446', 2, 2, 217)} />
        </g>
        <g fontFamily="Open Sans, sans-serif" fontStyle="italic" fontWeight="600" fontSize="10.500" fill="#6aa5ba" letterSpacing="1.900">
          <text x="523" y="200">Sea</text><text x="420" y="342">Gulf of</text><text x="421" y="358">Alaska</text>
          <text x="1059" y="320">Hudson</text><text x="1071" y="337">Bay</text>
        </g>
        <text transform="translate(744 446) rotate(38)" fontFamily="Open Sans, sans-serif" fontWeight="600" fontSize="12" fill="#888" letterSpacing=".5">rous</text>
      </g>
    </svg>
  );
};

/* ---------- page ---------- */
const Big = ({ icon, label, drop, as: Box = BigButton, ...rest }) => (
  <Box {...rest}><BigIcon>{icon}</BigIcon><BigText>{label}</BigText>{drop && <svg width="8" height="10" viewBox="0 0 8 10"><path d="M0 5h8L4 9z" fill="#888" /></svg>}</Box>
);
const Small = ({ icon, children, ...rest }) => <SmallButton {...rest}>{icon}<span>{children}</span></SmallButton>;

export default function App() {
  return (
    <Shell>
      <Global />
      <TabBar>
        <Tab $w={75} $project>Project</Tab><Tab $w={82}>Map</Tab><Tab $w={71}>Insert</Tab><Tab $w={102}>Analysis</Tab><Tab $w={70}>View</Tab>
        <Tab $w={61} $active>Edit</Tab><Tab $w={103}>Imagery</Tab><Tab $w={76}>Share</Tab>
        <TabSet $bg="#e6ece6" $gap={3}><Tab $w={69} $ls={0.5}>View</Tab></TabSet>
        <TabSet $bg="#f7eadc" $gap={4}><Tab $w={122} $ls={0.4}>Appearance</Tab><Tab $w={104}>Labeling</Tab><Tab $w={69} $ls={0.5}>Data</Tab></TabSet>
      </TabBar>
      <Ribbon>
        <Group $w={138}>
          <GroupBody>
            <Big $w={44} $ml={-16} $off icon={<PasteIcon />} label="Paste" drop />
            <Stack $ml={6} $w={104}>
              <Small $off $drop={2} $ls={0.9} icon={<CutIcon />}>Cut</Small>
              <Small $off $drop={2} $ls={0.9} icon={<CopyIcon />}>Copy</Small>
              <Small $off $drop={2} $ls={0.8} $gap={4} $h={29} icon={<CopyPathIcon />}>Copy Path</Small>
            </Stack>
          </GroupBody>
          <GroupName $pr={26} $ls={0.5}>Clipboard</GroupName>
        </Group>
        <Group $w={291}>
          <GroupBody $pl={5}>
            <Big $w={47} $on icon={<SaveIcon />} label="Save" />
            <Big $w={50} $ml={5} icon={<DiscardIcon />} label="Discard" $ls={0.45} />
            <Stack $ml={3} $w={175}>
              <Combo><TopologyIcon /><span>No Topology</span><Arrow /></Combo>
              <Small $pl={4} $gap={4} icon={<StatusIcon />}>Status</Small>
              <Small $pl={4} $gap={3} $h={29} $ls={0.4} icon={<ErrorIcon />}>Error Inspector</Small>
            </Stack>
          </GroupBody>
          <GroupName $pr={20} $ls={0.5}>Manage Edits</GroupName>
          <Launcher><LaunchIcon /></Launcher>
        </Group>
        <Group $w={81}>
          <GroupBody><Big $w={80} icon={<SnapIcon />} label="Snapping" $ls={0.65} drop /></GroupBody>
          <GroupName $ls={0.65}>Snapping</GroupName>
        </Group>
        <Group $w={167}>
          <GroupBody $pl={6}>
            <Big $w={49} icon={<CreateIcon />} label="Create" /><Big $w={57} icon={<ModifyIcon />} label="Modify" $ls={0.9} />
            <Big $w={48} $off icon={<Close c="#c9c7ca" s={23} w={2.2} />} label="Delete" />
          </GroupBody>
          <GroupName $pr={21} $ls={0.3}>Features</GroupName>
          <Launcher><LaunchIcon /></Launcher>
        </Group>
        <Group $w={157}>
          <GroupBody $pl={6}>
            <Big $w={47} icon={<SelectIcon />} label="Select" drop />
            <Stack $ml={3} $w={98}>
              <Small $gap={5} $drop={1} $ls={0.45} icon={<AttributesIcon />}>Attributes</Small>
              <Small $off $pl={3} $gap={7} $drop={1} $ls={0.5} icon={<PolySelect s={15} off />}>Clear</Small>
            </Stack>
          </GroupBody>
          <GroupName $pr={21} $ls={0.4}>Selection</GroupName>
          <Launcher><LaunchIcon /></Launcher>
        </Group>
        <Group $w={605}>
          <GroupBody $pl={5}>
            <Gallery>
              <Big as={GalleryItem} $w={96} icon={<MoveIcon />} label="Move" /><Big as={GalleryItem} $w={93} icon={<AnnotationIcon />} label="Annotation" $ls={0.6} />
              <Big as={GalleryItem} $w={97} icon={<VerticesIcon />} label="Vertices" $ls={0.2} /><Big as={GalleryItem} $w={94} icon={<ReshapeIcon />} label="Reshape" $ls={0.45} /><Big as={GalleryItem} $w={97} icon={<MergeIcon />} label="Merge" />
            </Gallery>
          </GroupBody>
          <GroupName>Tools</GroupName>
        </Group>
      </Ribbon>
      <Body>
        <Contents>
          <PaneHead><PaneTitle>Contents</PaneTitle><PaneTools><Arrow w={10} /><PinIcon /><Close /></PaneTools></PaneHead>
          <SearchRow><FilterSlot><FilterIcon /></FilterSlot><SearchBox><span>Search</span><SearchIcon /><Arrow c="#bbb" w={6} /></SearchBox></SearchRow>
          <ViewTabs>
            <ViewTab $on><TreeIcon /></ViewTab><ViewTab><CylinderIcon /></ViewTab><ViewTab><PolySelect /></ViewTab>
            <ViewTab><PencilIcon /></ViewTab><ViewTab><SnapIcon s={0.74} /></ViewTab><ViewTab><TagIcon /></ViewTab>
          </ViewTabs>
          <Heading>Drawing Order</Heading>
          <TreeRow $pl={4} $h={36} $pt={5} $gap={7} $rise={1}><MapIcon /><span>Map</span></TreeRow>
          <TreeRow $pl={4}><Expander /><Selected><Check /><span>CAN_WGS1984</span></Selected></TreeRow>
          <SwatchRow><Swatch /></SwatchRow>
          <TreeRow $pl={18} $h={34} $rise={-2}><Check /><span>World Topographic Map</span></TreeRow>
          <TreeRow $pl={18} $h={27} $rise={-2}><Check /><span>World Hillshade</span></TreeRow>
        </Contents>
        <Work>
          <MapTabs><MapTab><MapIcon /><span>Map</span><Close c="#98969a" /></MapTab></MapTabs>
          <MapFrame><MapDrawing /></MapFrame>
          <StatusBar>
            <ScaleBox>1:48,876,603<Arrow w={6} /></ScaleBox><VRule $h={18} $ml={5} $mr={8} />
            <StatusIcons><SnapIcon s={0.52} /><CorrectIcon /><GridIcon /><NorthIcon /></StatusIcons><VRule $h={18} $ml={8} />
            <Coords>128.8603674°W 72.1059817°N<svg width="12" height="8" viewBox="0 0 12 8"><path d="M1 1l5 5 5-5" fill="none" stroke="#666" strokeWidth="2.300" /></svg></Coords>
            <VRule $h={18} $ml={208} /><SelCount><ZoomSel off />Selected Features: 0</SelCount>
          </StatusBar>
          <TableTabs><TableTab><TableIcon s={18} /><span>CAN_WGS1984</span><Close c="#cfe6f8" /></TableTab></TableTabs>
          <TablePane>
            <Toolbar>
              <ToolLabel $w={47} $ls={0.35}>Field:</ToolLabel>
              <Tool $w={64} $off><TableIcon mark="+" o={0.4} />Add</Tool><Tool $w={77} $off $gap={5}><TableIcon mark="x" o={0.4} />Delete</Tool>
              <Tool $w={98} $gap={5}><TableIcon mark="=" c="#777" />Calculate</Tool><VRule $h={27} $mr={8} />
              <ToolLabel $w={80} $ls={0.7}>Selection:</ToolLabel>
              <Tool $w={96} $off $gap={2} $ls={0.9}><ZoomSel off rows />Zoom To</Tool><Tool $w={80} $ls={0.5}><SwitchIcon />Switch</Tool>
              <Tool $w={70} $off $gap={5}><ClearIcon />Clear</Tool><Tool $w={78} $off><DelRowIcon />Delete</Tool><Tool $w={70} $off $gap={3} $ls={0.9}><CopyRowIcon />Copy</Tool>
            </Toolbar>
            <HeadRow>
              <Corner><Expander s={11} /></Corner><HeadCell $ls={0.9}>OBJECTID</HeadCell><HeadCell>Shape</HeadCell><HeadCell>GID_0</HeadCell><HeadCell>NAME_0</HeadCell>
              <HeadCell $align="right" $ls={0.6}>Shape_Length</HeadCell><HeadCell $align="right">Shape_Area</HeadCell><HeadCell $on $ls={0.65}>Population</HeadCell>
            </HeadRow>
            <DataRow>
              <RowMark /><Cell>1</Cell><Cell $ls={0.9}>Polygon</Cell><Cell>CAN</Cell><Cell>Canada</Cell><Cell $align="right" $ls={0.1}>4996.131944</Cell><Cell $align="right" $ls={0}>1693.012591</Cell><Cell $align="right" $on $ls={0.1}>38000000</Cell>
            </DataRow>
            <AddRow><AddStub /><AddText>Click to add new row.</AddText></AddRow>
          </TablePane>
        </Work>
      </Body>
    </Shell>
  );
}
